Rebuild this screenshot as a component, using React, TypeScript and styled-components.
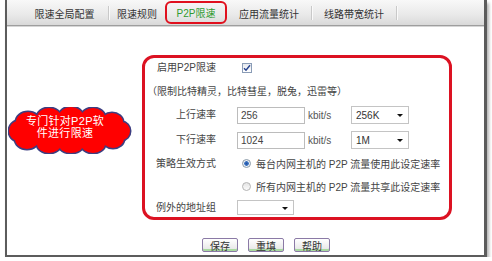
import styled, { createGlobalStyle } from 'styled-components';

const GlobalStyle = createGlobalStyle`
  html, body {
    margin: 0;
    padding: 0;
    background: #fff;
  }
  body {
    font-family: "Liberation Sans", "Noto Sans CJK SC", sans-serif;
    font-size: 10px;
    color: #333;
  }
`;

const Frame = styled.div`
  position: relative;
  margin-left: 5px;
  width: 477px;
  height: 255px;
  border-left: 2px solid #5c5c5c;
  border-right: 3px solid #5c5c5c;
  border-bottom: 2px solid #5c5c5c;
  box-shadow: 2px 3px 3px rgba(0, 0, 0, 0.3);
  background: #fff;
`;

const TabBar = styled.div`
  display: flex;
  align-items: center;
  height: 25px;
  padding-left: 14px;
  background: linear-gradient(#f8f8f8, #e9e9e9 60%, #d9d9d9);
  border-bottom: 1px solid #9e9e9e;
  box-shadow: 0 1px 0 #d6d6d6;
`;

const Tab = styled.div<{ $w: number; $active?: boolean }>`
  width: ${(p) => p.$w}px;
  height: ${(p) => (p.$active ? 23 : 25)}px;
  box-sizing: border-box;
  display: flex;
  align-items: center;
  justify-content: center;
  padding-top: ${(p) => (p.$active ? 0 : 2)}px;
  font-size: 10px;
  white-space: nowrap;
  color: ${(p) => (p.$active ? '#2f9a2f' : '#333')};
  border: ${(p) => (p.$active ? '2px solid #e0101e' : 'none')};
  border-radius: 6px;
`;

const Sep = styled.div`
  width: 1px;
  height: 14px;
  background: #c9c9c9;
  box-shadow: 1px 0 0 #fafafa;
`;

const RedBox = styled.div`
  margin: 29px 0 0 135px;
  width: 310px;
  box-sizing: border-box;
  border: 3px solid #dc1222;
  border-radius: 12px;
  padding: 0 0 0 11px;
`;

const Row = styled.div<{ $h: number }>`
  display: grid;
  grid-template-columns: 60px 1fr;
  column-gap: 21px;
  align-items: center;
  height: ${(p) => p.$h}px;
`;

const Note = styled.div<{ $h: number }>`
  display: flex;
  align-items: center;
  height: ${(p) => p.$h}px;
  margin-left: -9px;
  font-size: 10px;
  color: #444;
  white-space: nowrap;
`;

const Label = styled.div`
  text-align: right;
  white-space: nowrap;
  font-size: 10px;
  line-height: 12px;
  color: #444;
`;

const Value = styled.div`
  display: flex;
  align-items: center;
  white-space: nowrap;
`;

const Check = styled.span`
  margin-left: 5px;
  width: 10px;
  height: 10px;
  box-sizing: border-box;
  border: 1px solid #8a9cb6;
  background: linear-gradient(#e6e9ee, #fff);
  display: flex;
  align-items: center;
  justify-content: center;
`;

const TextBox = styled.input`
  width: 68px;
  height: 17px;
  box-sizing: border-box;
  border: 1px solid #bcbcbc;
  padding: 0 3px;
  margin: 0;
  font-family: "Liberation Sans", sans-serif;
  font-size: 10px;
  color: #444;
  background: #fff;
  outline: none;
`;

const Unit = styled.span`
  width: 43px;
  margin-left: 3px;
  font-size: 10px;
  color: #555;
`;

const Select = styled.div<{ $w: number; $h: number }>`
  position: relative;
  width: ${(p) => p.$w}px;
  height: ${(p) => p.$h}px;
  box-sizing: border-box;
  border: 1px solid #c4c4c4;
  padding-left: 4px;
  display: flex;
  align-items: center;
  font-size: 10px;
  color: #333;
  background: #fff;

  &::after {
    content: '';
    position: absolute;
    right: 5px;
    top: 50%;
    margin-top: -1px;
    border-left: 3px solid transparent;
    border-right: 3px solid transparent;
    border-top: 3px solid #111;
  }
`;

const Radio = styled.span<{ $on?: boolean }>`
  margin-left: 5px;
  margin-right: 5px;
  width: 9px;
  height: 9px;
  box-sizing: border-box;
  border-radius: 50%;
  border: 1px solid ${(p) => (p.$on ? '#8a9aa8' : '#b4b4b4')};
  background: ${(p) =>
    p.$on
      ? 'radial-gradient(circle, #1f4f9e 0, #3d75c4 2px, #e8eef4 2.6px, #f6f6f6 100%)'
      : 'linear-gradient(#e4e4e4, #fbfbfb)'};
`;

const RadioText = styled.span`
  font-size: 10px;
  color: #444;
`;

const Buttons = styled.div`
  display: flex;
  gap: 10px;
  margin: 18px 0 0 195px;
`;

const Button = styled.div`
  width: 36px;
  height: 14px;
  box-sizing: border-box;
  border: 1px solid #8b7aa6;
  border-radius: 2px;
  background: linear-gradient(#ffffff, #e4e4e4);
  box-shadow: inset 0 -2px 0 #a9d9a0;
  display: flex;
  align-items: center;
  justify-content: center;
  font-size: 10px;
  color: #333;
`;

const Cloud = styled.div`
  position: absolute;
  left: 1px;
  top: 107px;
  width: 124px;
  height: 47px;

  svg {
    position: absolute;
    inset: 0;
  }
`;

const CloudText = styled.div`
  position: relative;
  padding-top: 8px;
  width: 114px;
  text-align: center;
  font-size: 11px;
  line-height: 12px;
  letter-spacing: 0.3px;
  color: #fff;
`;

const bumps: [number, number, number, number][] = [
  [62, 24, 50, 15],
  [20, 15, 12, 10],
  [41, 10, 12, 9],
  [63, 9, 12, 9],
  [85, 10, 12, 9],
  [104, 15, 11, 9],
  [19, 32, 12, 10],
  [41, 37, 12, 9],
  [63, 38, 12, 8],
  [85, 37, 12, 9],
  [105, 32, 11, 9],
  [10, 24, 9, 10],
  [114, 24, 8, 9],
];

const CloudShape = () => (
  <svg width="124" height="47" viewBox="0 0 124 47">
    {bumps.map(([cx, cy, rx, ry], i) => (
      <ellipse key={`s${i}`} cx={cx} cy={cy} rx={rx} ry={ry} fill="#3e3e80" stroke="#3e3e80" strokeWidth="3" />
    ))}
    {bumps.map(([cx, cy, rx, ry], i) => (
      <ellipse key={`f${i}`} cx={cx} cy={cy} rx={rx} ry={ry} fill="#ff0000" />
    ))}
  </svg>
);

const App = () => {
  return (
    <>
      <GlobalStyle />
      <Frame>
        <TabBar>
          <Tab $w={87}>限速全局配置</Tab>
          <Sep />
          <Tab $w={56}>限速规则</Tab>
          <Tab $w={62} $active>
            P2P限速
          </Tab>
          <Tab $w={84}>应用流量统计</Tab>
          <Sep />
          <Tab $w={84}>线路带宽统计</Tab>
          <Sep />
        </TabBar>

        <RedBox>
          <Row $h={20}>
            <Label>启用P2P限速</Label>
            <Value>
              <Check>
                <svg width="8" height="8" viewBox="0 0 8 8">
                  <path d="M1 4.2 L3 6.3 L7 1.2" fill="none" stroke="#23408e" strokeWidth="1.4" />
                </svg>
              </Check>
            </Value>
          </Row>
          <Note $h={24}>（限制比特精灵，比特彗星，脱兔，迅雷等）</Note>
          <Row $h={26}>
            <Label>上行速率</Label>
            <Value>
              <TextBox readOnly value="256" />
              <Unit>kbit/s</Unit>
              <Select $w={58} $h={18}>256K</Select>
            </Value>
          </Row>
          <Row $h={24}>
            <Label>下行速率</Label>
            <Value>
              <TextBox readOnly value="1024" />
              <Unit>kbit/s</Unit>
              <Select $w={58} $h={18}>1M</Select>
            </Value>
          </Row>
          <Row $h={23}>
            <Label>策略生效方式</Label>
            <Value>
              <Radio $on />
              <RadioText>每台内网主机的 P2P 流量使用此设定速率</RadioText>
            </Value>
          </Row>
          <Row $h={23}>
            <Label />
            <Value>
              <Radio />
              <RadioText>所有内网主机的 P2P 流量共享此设定速率</RadioText>
            </Value>
          </Row>
          <Row $h={19}>
            <Label>例外的地址组</Label>
            <Value>
              <Select $w={57} $h={15} />
            </Value>
          </Row>
        </RedBox>

        <Buttons>
          <Button>保存</Button>
          <Button>重填</Button>
          <Button>帮助</Button>
        </Buttons>

        <Cloud>
          <CloudShape />
          <CloudText>
            专门针对P2P软
            <br />
            件进行限速
          </CloudText>
        </Cloud>
      </Frame>
    </>
  );
};

export default App;
